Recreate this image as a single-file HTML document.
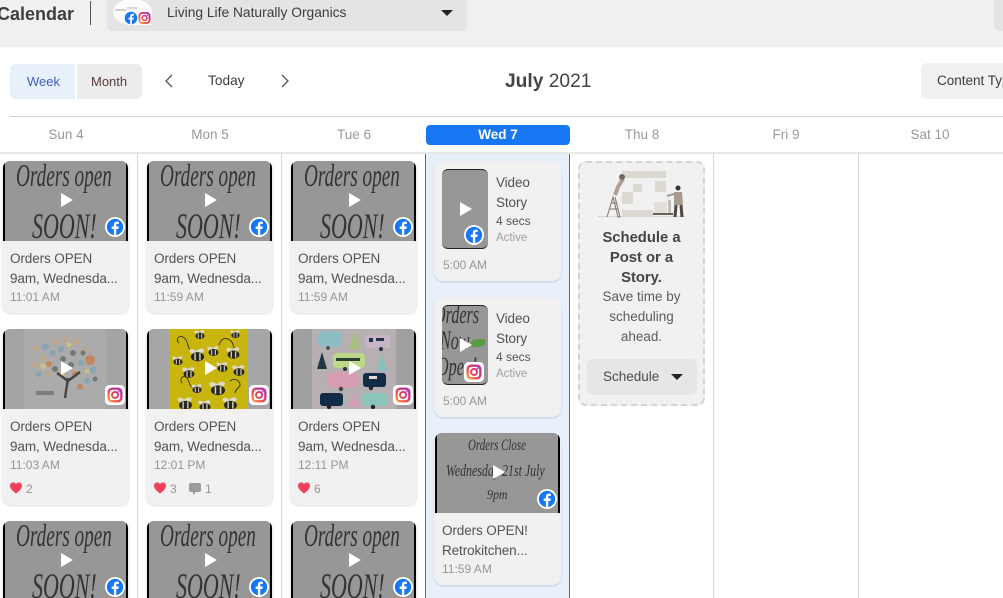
<!DOCTYPE html>
<html><head><meta charset="utf-8">
<style>
html,body{margin:0;padding:0;width:1003px;height:598px;overflow:hidden;background:#fff;font-family:"Liberation Sans",sans-serif;color:#444}
.a{position:absolute;white-space:nowrap}
#wrap{position:relative;width:1003px;height:598px;overflow:hidden}
.card{position:absolute;width:127px;background:#f1f1f1;border-radius:9px;box-shadow:0 1px 2px rgba(0,0,0,.14)}
.img{position:absolute;left:1px;top:0;width:125px;height:80px;border-radius:7px 7px 0 0;overflow:hidden;background:#979797}
.img:before,.img:after{content:"";position:absolute;top:0;bottom:0;width:2px;background:#000;z-index:2}
.img:before{left:0}.img:after{right:0}
.t{position:absolute;left:8px;font-size:13.5px;letter-spacing:-.1px;white-space:nowrap;color:#525252;line-height:16px}
.tm{position:absolute;left:8px;font-size:12px;color:#979797;white-space:nowrap;line-height:14px}
.hw{position:absolute;font-family:"Liberation Serif",serif;font-style:italic;color:#333;white-space:nowrap;transform-origin:0 0}
.o1{left:13px;top:-4px;font-size:32px;transform:scaleX(.6)}
.o2{left:29px;top:44px;font-size:36px;transform:scaleX(.61)}
.play{position:absolute;left:58px;top:32px;width:0;height:0;border-left:12px solid #fff;border-top:7.5px solid transparent;border-bottom:7.5px solid transparent;z-index:3}
.ic{position:absolute;left:103px;top:56px;width:20px;height:20px;z-index:4}
.hd{position:absolute;top:127px;font-size:13.5px;color:#999;line-height:15px;white-space:nowrap;transform:translateX(-50%)}
.vl{position:absolute;top:153px;bottom:0;width:1px;background:#d6d6d6}
.ct{position:absolute;font-size:12px;color:#979797;line-height:14px}
</style></head>
<body><div id="wrap">
<svg width="0" height="0" style="position:absolute">
<defs>
<symbol id="fb" viewBox="0 0 22 22"><circle cx="11" cy="11" r="11" fill="#fff"/><circle cx="11" cy="11" r="9" fill="#1877f2"/><path d="M12.4 20v-6.800h2.300l.4-2.700h-2.700V8.900c0-.8.300-1.300 1.400-1.300h1.400V5.200c-.3 0-1.100-.1-2-.1-2.100 0-3.400 1.200-3.400 3.500v1.900H7.400v2.700h2.400V20z" fill="#fff"/></symbol>
<linearGradient id="ig" gradientUnits="userSpaceOnUse" x1="3" y1="19" x2="19" y2="3"><stop offset="0" stop-color="#fdb43a"/><stop offset=".45" stop-color="#ee3d5d"/><stop offset="1" stop-color="#a02fc0"/></linearGradient>
<symbol id="in" viewBox="0 0 22 22"><rect width="22" height="22" rx="5" fill="#fff"/><rect x="4" y="4" width="14" height="14" rx="4" fill="none" stroke="url(#ig)" stroke-width="2.600"/><circle cx="11" cy="11" r="3.300" fill="none" stroke="url(#ig)" stroke-width="2.200"/><circle cx="15" cy="7" r="1.100" fill="#c02ea0"/></symbol>
<symbol id="h" viewBox="0 0 12 11"><path d="M6 11C2 8 0 6 0 3.300 0 1.300 1.500 0 3.200 0 4.400 0 5.400.6 6 1.600 6.600.6 7.600 0 8.800 0 10.500 0 12 1.300 12 3.300 12 6 10 8 6 11z" fill="#f2405f"/></symbol>
<symbol id="bee" viewBox="0 0 14 12" overflow="visible"><ellipse cx="3.500" cy="3" rx="3.500" ry="2" fill="#dcd9c4" transform="rotate(25 3.500 3)"/><ellipse cx="9" cy="2.500" rx="3.500" ry="2" fill="#dcd9c4" transform="rotate(-20 9 2.500)"/><ellipse cx="7" cy="7" rx="5.500" ry="3.800" fill="#26261c"/><path d="M5 4v6M9 4v6" stroke="#d6d2b8" stroke-width="1.200"/></symbol>
</defs></svg>

<!-- top bar -->
<div class="a" style="left:0;top:0;width:1003px;height:46px;background:#f0f0f0;box-shadow:0 1px 1px rgba(0,0,0,.08)"></div>
<div class="a" style="left:-3px;top:2px;font-size:18px;font-weight:bold;color:#3e3e3e;line-height:24px">Calendar</div>
<div class="a" style="left:90px;top:1px;width:1px;height:24px;background:#555"></div>
<div class="a" style="left:107px;top:-4px;width:360px;height:35px;background:#e4e4e4;border-radius:6px"></div>
<div class="a" style="left:113px;top:-1px;width:39px;height:26px;background:#fbfbfb;border-radius:50%"></div>
<div class="a" style="left:115px;top:9px;width:11px;height:2px;background:#d2d2d2"></div>
<div class="a" style="left:127px;top:7px;width:10px;height:2px;background:#d8d8d8"></div>
<svg class="a" style="left:124px;top:11px" width="14" height="14" viewBox="1 1 20 20"><use href="#fb" width="22" height="22"/></svg>
<svg class="a" style="left:138px;top:11px" width="13" height="14" viewBox="2 2 18 18"><use href="#in" width="22" height="22"/></svg>
<div class="a" style="left:167px;top:5px;font-size:13.8px;line-height:16px;color:#3c3c3c">Living Life Naturally Organics</div>
<div class="a" style="left:441px;top:10px;border-top:6px solid #222;border-left:6px solid transparent;border-right:6px solid transparent;width:0;height:0"></div>
<div class="a" style="left:994px;top:-4px;width:20px;height:35px;background:#e4e4e4;border-radius:6px"></div>

<!-- toolbar -->
<div class="a" style="left:10px;top:64px;width:65px;height:35px;background:#e7f0fb;border-radius:6px 0 0 6px"></div>
<div class="a" style="left:77px;top:64px;width:65px;height:35px;background:#ececec;border-radius:0 6px 6px 0"></div>
<div class="a" style="left:27px;top:74px;font-size:13px;line-height:15px;color:#3f63c4">Week</div>
<div class="a" style="left:91px;top:74px;font-size:13px;line-height:15px;color:#5a3a3a">Month</div>
<svg class="a" style="left:163px;top:73px" width="12" height="16"><path d="M9 2L3 8l6 6" fill="none" stroke="#555" stroke-width="1.300"/></svg>
<div class="a" style="left:208px;top:73px;font-size:13.7px;line-height:16px;color:#3c3c3c">Today</div>
<svg class="a" style="left:279px;top:73px" width="12" height="16"><path d="M3 2l6 6-6 6" fill="none" stroke="#555" stroke-width="1.300"/></svg>
<div class="a" style="left:505px;top:70px;font-size:19.2px;line-height:24px;color:#444"><b>July</b> 2021</div>
<div class="a" style="left:921px;top:63px;width:100px;height:36px;background:#f1f1f1;border-radius:6px"></div>
<div class="a" style="left:937px;top:73px;font-size:13.5px;line-height:16px;color:#3c3c3c">Content Type</div>

<!-- day header -->
<div class="a" style="left:10px;top:116px;width:993px;height:1px;background:#d2d2d2"></div>
<div class="hd" style="left:66px">Sun 4</div>
<div class="hd" style="left:210px">Mon 5</div>
<div class="hd" style="left:354px">Tue 6</div>
<div class="a" style="left:426px;top:125px;width:144px;height:20px;background:#1877f2;border-radius:4px"></div>
<div class="hd" style="left:498px;color:#fff;font-weight:bold">Wed 7</div>
<div class="hd" style="left:642px">Thu 8</div>
<div class="hd" style="left:786px">Fri 9</div>
<div class="hd" style="left:930px">Sat 10</div>
<div class="a" style="left:0;top:152px;width:1003px;height:2px;background:#e8e8e8"></div>

<!-- column lines -->
<div class="vl" style="left:137px"></div>
<div class="vl" style="left:281px"></div>
<div class="vl" style="left:713px"></div>
<div class="vl" style="left:858px"></div>
<div class="a" style="left:425px;top:154px;width:143px;height:444px;background:#e7f0fb;border-left:1px solid #1877f2;border-right:1px solid #1877f2"></div>

<!-- ROW 1 -->
<div class="card" style="left:2px;top:161px;height:152px"><div class="img"><div class="hw o1">Orders open</div><div class="hw o2">SOON!</div><div class="play"></div></div><svg class="ic"><use href="#fb" width="20" height="20"/></svg><div class="t" style="top:90px">Orders OPEN</div><div class="t" style="top:110px">9am, Wednesda...</div><div class="tm" style="top:129px">11:01 AM</div></div>
<div class="card" style="left:146px;top:161px;height:152px"><div class="img"><div class="hw o1">Orders open</div><div class="hw o2">SOON!</div><div class="play"></div></div><svg class="ic"><use href="#fb" width="20" height="20"/></svg><div class="t" style="top:90px">Orders OPEN</div><div class="t" style="top:110px">9am, Wednesda...</div><div class="tm" style="top:129px">11:59 AM</div></div>
<div class="card" style="left:290px;top:161px;height:152px"><div class="img"><div class="hw o1">Orders open</div><div class="hw o2">SOON!</div><div class="play"></div></div><svg class="ic"><use href="#fb" width="20" height="20"/></svg><div class="t" style="top:90px">Orders OPEN</div><div class="t" style="top:110px">9am, Wednesda...</div><div class="tm" style="top:129px">11:59 AM</div></div>

<!-- ROW 2 -->
<div class="card" style="left:2px;top:329px;height:176px"><div class="img" style="background:#a4a4a4">
<svg class="a" style="left:0;top:0" width="125" height="80"><rect x="21" y="0" width="82" height="80" fill="#acabab"/>
<g opacity=".8">
<g fill="#c4a57e"><circle cx="33" cy="19" r="3"/><circle cx="40" cy="29" r="3"/><circle cx="52" cy="13" r="3"/><circle cx="62" cy="11" r="3"/><circle cx="74" cy="13" r="3"/><circle cx="32" cy="36" r="3"/><circle cx="45" cy="46" r="3"/><circle cx="82" cy="22" r="3"/></g>
<g fill="#7fa3b5"><circle cx="42" cy="18" r="3.500"/><circle cx="50" cy="24" r="3"/><circle cx="36" cy="45" r="3"/><circle cx="58" cy="20" r="3"/><circle cx="90" cy="41" r="3.500"/><circle cx="84" cy="52" r="3"/><circle cx="78" cy="34" r="3"/></g>
<g fill="#c77f4c"><circle cx="87" cy="31" r="5"/><circle cx="72" cy="45" r="3"/><circle cx="46" cy="35" r="3"/><circle cx="77" cy="58" r="3"/></g>
<g fill="#5f6f66"><circle cx="80" cy="24" r="2.500"/><circle cx="60" cy="30" r="3"/><circle cx="52" cy="40" r="3"/><circle cx="70" cy="24" r="3"/><circle cx="68" cy="36" r="3"/><circle cx="92" cy="50" r="2.500"/></g>
<g fill="#d2c27a"><circle cx="40" cy="37" r="3"/><circle cx="59" cy="46" r="2.500"/><circle cx="84" cy="42" r="2.500"/><circle cx="66" cy="16" r="2.500"/></g></g>
<path d="M62 69l3-20M65 52l-11-8M65 52l12-9" stroke="#474442" stroke-width="2.400" fill="none"/>
<rect x="33" y="62" width="18" height="4" fill="#807b77"/></svg>
<div class="play"></div></div><svg class="ic"><use href="#in" width="20" height="20"/></svg><div class="t" style="top:90px">Orders OPEN</div><div class="t" style="top:110px">9am, Wednesda...</div><div class="tm" style="top:129px">11:03 AM</div>
<svg class="a" style="left:8px;top:153px" width="12" height="12"><use href="#h" width="12" height="12"/></svg><div class="ct" style="left:24px;top:153px">2</div></div>

<div class="card" style="left:146px;top:329px;height:176px"><div class="img" style="background:#a6a6a6">
<svg class="a" style="left:0;top:0" width="125" height="80"><rect x="23" y="0" width="78" height="80" fill="#c8b50e"/>
<g fill="none" stroke="#332f12" stroke-width=".9"><path d="M32 14c-4-4 0-8 4-6 6 3 4 14 10 15M72 16c2-6 6-9 12-4 3 3 2 8 6 9M35 54c-3-4 1-9 5-5 3 4 2 9 7 10M83 52c5-4 10 0 10 4 0 3-4 3-5 8"/></g>
<g><use href="#bee" x="47" y="1" width="12" height="10"/><use href="#bee" x="83" y="1" width="11" height="9"/><use href="#bee" x="42" y="19" width="17" height="15"/><use href="#bee" x="60" y="17" width="13" height="11"/><use href="#bee" x="79" y="18" width="15" height="13"/><use href="#bee" x="25" y="27" width="12" height="10"/><use href="#bee" x="35" y="38" width="14" height="12"/><use href="#bee" x="69" y="33" width="13" height="11"/><use href="#bee" x="85" y="36" width="14" height="12"/><use href="#bee" x="44" y="55" width="12" height="10"/><use href="#bee" x="62" y="52" width="18" height="16"/><use href="#bee" x="30" y="68" width="17" height="14"/><use href="#bee" x="51" y="71" width="14" height="12"/><use href="#bee" x="75" y="68" width="17" height="14"/></g></svg>
<div class="play"></div></div><svg class="ic"><use href="#in" width="20" height="20"/></svg><div class="t" style="top:90px">Orders OPEN</div><div class="t" style="top:110px">9am, Wednesda...</div><div class="tm" style="top:129px">12:01 PM</div>
<svg class="a" style="left:8px;top:153px" width="12" height="12"><use href="#h" width="12" height="12"/></svg><div class="ct" style="left:24px;top:153px">3</div>
<svg class="a" style="left:43px;top:154px" width="12" height="12"><path d="M2 0h8a2 2 0 012 2v5a2 2 0 01-2 2H7l-3 3V9H2a2 2 0 01-2-2V2a2 2 0 012-2z" fill="#9a9a9a"/></svg><div class="ct" style="left:59px;top:153px">1</div></div>

<div class="card" style="left:290px;top:329px;height:176px"><div class="img" style="background:#a0a0a0">
<svg class="a" style="left:0;top:0" width="125" height="80"><rect x="21" y="0" width="84" height="80" fill="#b6b0b3"/>
<rect x="27" y="2" width="24" height="16" rx="5" fill="#8dbdc2"/><circle cx="37" cy="19" r="2" fill="#555"/>
<path d="M58 20l6-17 6 17z" fill="#a9bf7e"/>
<rect x="74" y="6" width="25" height="13" rx="3" fill="#c8b6c6"/><rect x="78" y="9" width="4" height="4" fill="#27304a"/><rect x="85" y="9" width="8" height="3" fill="#27304a"/><circle cx="90" cy="20" r="2" fill="#27304a"/>
<path d="M26 40l5-17 5 17z" fill="#1e3a48"/>
<rect x="42" y="24" width="32" height="15" rx="4" fill="#bcd88a"/><rect x="45" y="29" width="24" height="3" fill="#2a4030"/><circle cx="54" cy="40" r="2" fill="#333"/>
<path d="M86 42l5-18 5 18z" fill="#84c0bc"/>
<rect x="36" y="43" width="32" height="16" rx="7" fill="#d79db5"/><circle cx="50" cy="60" r="2.200" fill="#444"/>
<rect x="72" y="44" width="23" height="14" rx="3" fill="#122c48"/><rect x="78" y="47" width="8" height="3" fill="#e0dcdc"/><circle cx="80" cy="59" r="2.200" fill="#222"/>
<rect x="29" y="64" width="23" height="13" rx="3" fill="#122c48"/><circle cx="38" cy="78" r="2.200" fill="#222"/>
<path d="M58 78l5-15 5 15z" fill="#d79db5"/>
<rect x="71" y="64" width="26" height="13" rx="5" fill="#8bc6bd"/><circle cx="82" cy="78" r="2.200" fill="#222"/></svg>
<div class="play"></div></div><svg class="ic"><use href="#in" width="20" height="20"/></svg><div class="t" style="top:90px">Orders OPEN</div><div class="t" style="top:110px">9am, Wednesda...</div><div class="tm" style="top:129px">12:11 PM</div>
<svg class="a" style="left:8px;top:153px" width="12" height="12"><use href="#h" width="12" height="12"/></svg><div class="ct" style="left:24px;top:153px">6</div></div>

<!-- ROW 3 -->
<div class="card" style="left:2px;top:521px;height:100px"><div class="img"><div class="hw o1">Orders open</div><div class="hw o2">SOON!</div><div class="play"></div></div><svg class="ic"><use href="#fb" width="20" height="20"/></svg></div>
<div class="card" style="left:146px;top:521px;height:100px"><div class="img"><div class="hw o1">Orders open</div><div class="hw o2">SOON!</div><div class="play"></div></div><svg class="ic"><use href="#fb" width="20" height="20"/></svg></div>
<div class="card" style="left:290px;top:521px;height:100px"><div class="img"><div class="hw o1">Orders open</div><div class="hw o2">SOON!</div><div class="play"></div></div><svg class="ic"><use href="#fb" width="20" height="20"/></svg></div>

<!-- WED -->
<div class="card" style="left:434px;top:161px;height:120px">
<div class="a" style="left:8px;top:8px;width:46px;height:80px;background:#979797;border-radius:6px;border-top:1px solid #222;border-bottom:1px solid #222;box-sizing:border-box"></div>
<div class="play" style="left:26px;top:41px"></div><svg class="ic" style="left:30px;top:64px"><use href="#fb" width="20" height="20"/></svg>
<div class="t" style="left:62px;top:14px">Video</div><div class="t" style="left:62px;top:34px">Story</div>
<div class="a" style="left:62px;top:53px;font-size:12px;line-height:14px;color:#555">4 secs</div><div class="a" style="left:62px;top:70px;font-size:11.5px;line-height:14px;color:#a0a0a0">Active</div>
<div class="tm" style="left:9px;top:97px">5:00 AM</div></div>

<div class="card" style="left:434px;top:297px;height:120px">
<div class="a" style="left:8px;top:8px;width:46px;height:80px;background:#979797;border-radius:6px;overflow:hidden;border-top:1px solid #222;border-bottom:1px solid #222;box-sizing:border-box">
<div class="hw" style="left:-8px;top:-6px;font-size:26px;transform:scaleX(.62)">Orders</div><div class="hw" style="left:-2px;top:20px;font-size:26px;transform:scaleX(.62)">Now</div><div class="hw" style="left:-5px;top:46px;font-size:26px;transform:scaleX(.62)">Open!</div>
<div class="a" style="left:29px;top:33px;width:14px;height:8px;background:#5c9a44;border-radius:50% 0"></div></div>
<div class="play" style="left:26px;top:41px"></div><svg class="ic" style="left:30px;top:65px"><use href="#in" width="20" height="20"/></svg>
<div class="t" style="left:62px;top:14px">Video</div><div class="t" style="left:62px;top:34px">Story</div>
<div class="a" style="left:62px;top:53px;font-size:12px;line-height:14px;color:#555">4 secs</div><div class="a" style="left:62px;top:70px;font-size:11.5px;line-height:14px;color:#a0a0a0">Active</div>
<div class="tm" style="left:9px;top:97px">5:00 AM</div></div>

<div class="card" style="left:434px;top:433px;height:152px"><div class="img"><div class="hw" style="left:33px;top:4px;font-size:16px;transform:scaleX(.68)">Orders Close</div><div class="hw" style="left:11px;top:28px;font-size:17px;transform:scaleX(.7)">Wednesday 21st July</div><div class="hw" style="left:52px;top:55px;font-size:14px;transform:scaleX(.85)">9pm</div><div class="play"></div></div><svg class="ic"><use href="#fb" width="20" height="20"/></svg><div class="t" style="top:90px">Orders OPEN!</div><div class="t" style="top:110px">Retrokitchen...</div><div class="tm" style="top:129px">11:59 AM</div></div>

<!-- THU -->
<div class="a" style="left:578px;top:161px;width:127px;height:245px;box-sizing:border-box;background:#f1f1f1;border:2px dashed #d4d4d4;border-radius:8px"></div>
<svg class="a" style="left:596px;top:168px;overflow:visible" width="94" height="52"><g transform="translate(4 0)">
<rect x="22" y="3" width="44" height="7" fill="#dcd8d2"/><rect x="55" y="13" width="11" height="11" fill="#dcd8d2"/><rect x="33" y="16" width="9" height="8" fill="#dcd8d2"/><rect x="22" y="24" width="11" height="12" fill="#dcd8d2"/><rect x="22" y="42" width="31" height="7" fill="#dcd8d2"/>
<path d="M-2 48.500h87" stroke="#d8d4ce"/>
<path d="M7 49l6-20 5 20h2l-5-20M10 41h8M11 35h6" stroke="#7d736a" fill="none"/>
<path d="M15 27l3-8 3-5 2-3" stroke="#b09f94" stroke-width="4" fill="none"/><circle cx="22" cy="9" r="3" fill="#716860"/>
<rect x="54" y="34" width="13" height="11" fill="#e2dfda"/><rect x="68" y="32" width="3" height="13" fill="#c4bdb6"/><path d="M53 46h20" stroke="#6c6056" stroke-width="2"/>
<circle cx="78" cy="20" r="2.500" fill="#3a3230"/><path d="M74 24h8l1 13h-9z" fill="#a79a8f"/><path d="M76 37l-1 12M81 37l1 12" stroke="#4e4640" stroke-width="3"/><path d="M74 26l-7 2" stroke="#a79a8f" stroke-width="2"/></g>
</svg>
<div class="a" style="left:578px;top:228px;width:127px;text-align:center;font-size:14.8px;font-weight:bold;line-height:20px;color:#444;white-space:normal">Schedule a<br>Post or a<br>Story.</div>
<div class="a" style="left:578px;top:287px;width:127px;text-align:center;font-size:13.5px;line-height:20px;color:#5c5c5c;white-space:normal">Save time by<br>scheduling<br>ahead.</div>
<div class="a" style="left:587px;top:359px;width:110px;height:36px;background:#e6e6e6;border-radius:6px"></div>
<div class="a" style="left:603px;top:369px;font-size:13.5px;line-height:16px;color:#4b4b4b">Schedule</div>
<div class="a" style="left:671px;top:374px;width:0;height:0;border-top:6px solid #222;border-left:6px solid transparent;border-right:6px solid transparent"></div>
</div></body></html>
